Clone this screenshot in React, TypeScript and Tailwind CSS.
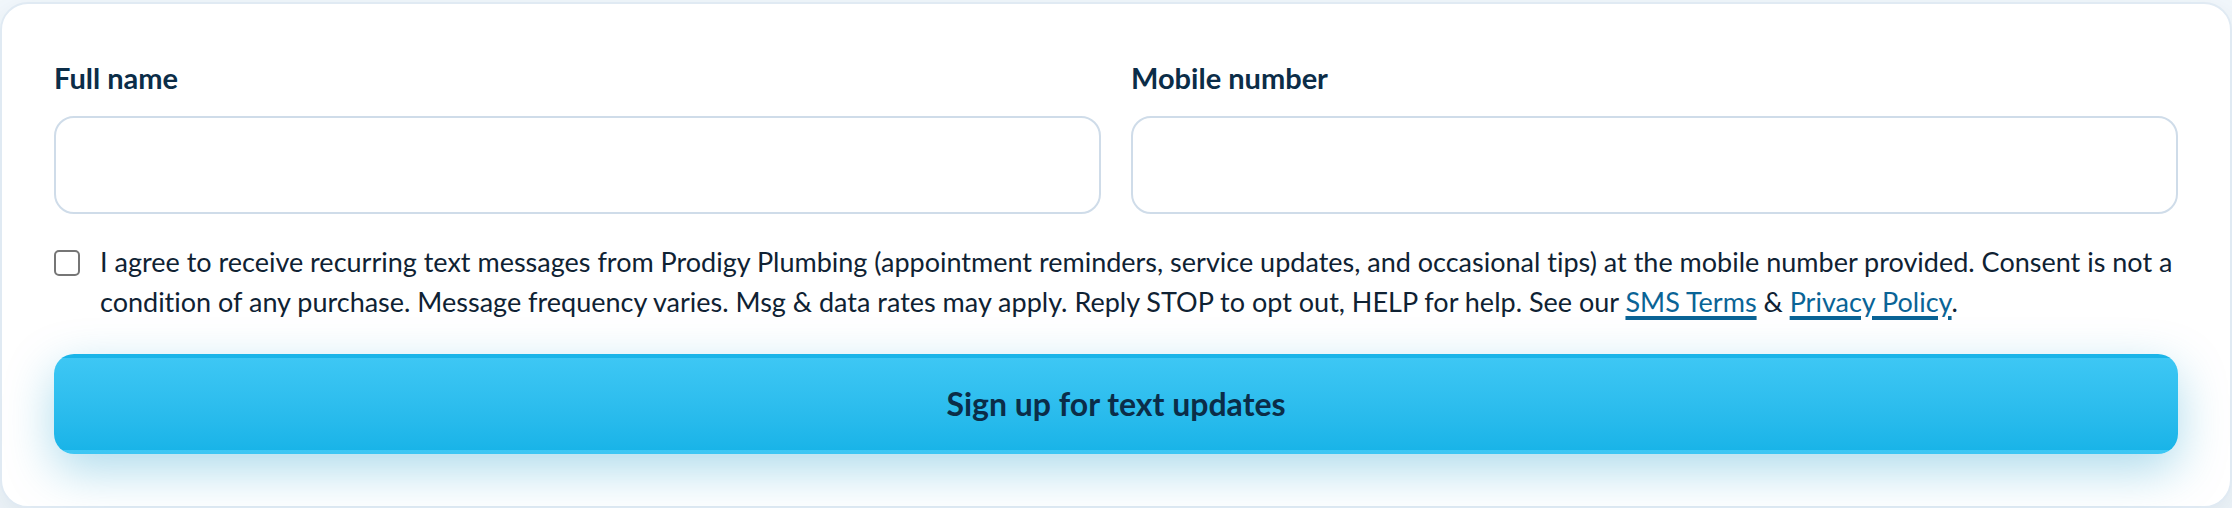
import { useId, useState } from 'react'
import type { FormEvent, HTMLInputTypeAttribute } from 'react'

interface FieldProps {
  label: string
  type: HTMLInputTypeAttribute
  autoComplete: string
  value: string
  onChange: (value: string) => void
}

function Field({ label, type, autoComplete, value, onChange }: FieldProps) {
  const id = useId()

  return (
    <div className="flex min-w-0 flex-1 flex-col gap-[18px]">
      <label htmlFor={id} className="text-[29px] leading-10 font-bold text-[#0b2d48]">
        {label}
      </label>
      <input
        id={id}
        type={type}
        autoComplete={autoComplete}
        value={value}
        onChange={(e) => onChange(e.target.value)}
        className="w-full rounded-[20px] border-2 border-[#cfdce9] bg-white px-7 py-6 text-[27px] leading-[46px] text-[#0f2233] outline-none focus:border-[#19b4e8]"
      />
    </div>
  )
}

const linkClass = 'text-[#0a6496] underline decoration-4 underline-offset-4'

export default function App() {
  const [name, setName] = useState('')
  const [mobile, setMobile] = useState('')
  const [agreed, setAgreed] = useState(false)

  const handleSubmit = (e: FormEvent) => {
    e.preventDefault()
  }

  return (
    <main className="bg-[#f3f9fd] pt-0.5 font-['Lato',sans-serif] [font-variant-ligatures:none]">
      <form
        onSubmit={handleSubmit}
        className="flex flex-col rounded-[28px] border-2 border-[#e0eaf3] bg-white px-[52px] pt-[54px] pb-[52px] shadow-[0_16px_48px_rgba(11,45,72,0.12)]"
      >
        <div className="flex gap-[30px]">
          <Field label="Full name" type="text" autoComplete="name" value={name} onChange={setName} />
          <Field label="Mobile number" type="tel" autoComplete="tel" value={mobile} onChange={setMobile} />
        </div>

        <div className="mt-7 flex items-start gap-5">
          <input
            id="sms-consent"
            type="checkbox"
            checked={agreed}
            onChange={(e) => setAgreed(e.target.checked)}
            className="mt-2 size-[26px] shrink-0 appearance-none rounded-[5px] border-2 border-[#767676] bg-white checked:border-[#0a6496] checked:bg-[#0a6496]"
          />
          <label htmlFor="sms-consent" className="text-[27px] leading-10 text-[#0f2233]">
            I agree to receive recurring text messages from Prodigy Plumbing (appointment reminders, service updates,
            and occasional tips) at the mobile number provided. Consent is not a condition of any purchase. Message
            frequency varies. Msg &amp; data rates may apply. Reply STOP to opt out, HELP for help. See our{' '}
            <a href="#sms-terms" className={linkClass}>
              SMS Terms
            </a>{' '}
            &amp;{' '}
            <a href="#privacy" className={linkClass}>
              Privacy Policy
            </a>
            .
          </label>
        </div>

        {/* The gradient repeats under the transparent border, which gives the dark top and light bottom edges */}
        <button
          type="submit"
          className="mt-8 cursor-pointer rounded-[20px] border-4 border-transparent bg-linear-to-b from-[#3dc7f4] to-[#19b4e8] py-6 text-[32px] leading-[44px] font-bold text-[#0b2d48] shadow-[0_16px_48px_rgba(14,150,200,0.34)]"
        >
          Sign up for text updates
        </button>
      </form>
    </main>
  )
}
